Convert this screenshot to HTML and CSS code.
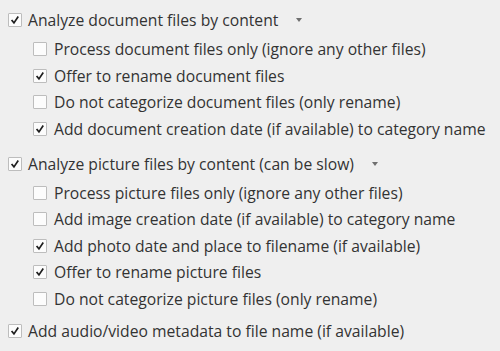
FILE: index.html
```html
<!DOCTYPE html>
<html lang="en">
<head>
    <meta charset="UTF-8">
    <title>Content analysis options</title>
    <link rel="stylesheet" href="styles.css">
</head>
<body>
    <div class="options">
        <!-- documents -->
        <div class="row main">
            <span class="box checked"><svg viewBox="0 0 14 14"><polyline points="3,7 5.8,10.4 10.8,3"/></svg></span>
            <span class="label">Analyze document files by content</span>
            <span class="arrow"></span>
        </div>
        <div class="group first">
            <div class="row sub">
                <span class="box"></span>
                <span class="label">Process document files only (ignore any other files)</span>
            </div>
            <div class="row sub">
                <span class="box checked"><svg viewBox="0 0 14 14"><polyline points="3,7 5.8,10.4 10.8,3"/></svg></span>
                <span class="label">Offer to rename document files</span>
            </div>
            <div class="row sub">
                <span class="box"></span>
                <span class="label">Do not categorize document files (only rename)</span>
            </div>
            <div class="row sub">
                <span class="box checked"><svg viewBox="0 0 14 14"><polyline points="3,7 5.8,10.4 10.8,3"/></svg></span>
                <span class="label">Add document creation date (if available) to category name</span>
            </div>
        </div>

        <!-- pictures -->
        <div class="row main">
            <span class="box checked"><svg viewBox="0 0 14 14"><polyline points="3,7 5.8,10.4 10.8,3"/></svg></span>
            <span class="label">Analyze picture files by content (can be slow)</span>
            <span class="arrow"></span>
        </div>
        <div class="group second">
            <div class="row sub">
                <span class="box"></span>
                <span class="label">Process picture files only (ignore any other files)</span>
            </div>
            <div class="row sub">
                <span class="box"></span>
                <span class="label">Add image creation date (if available) to category name</span>
            </div>
            <div class="row sub">
                <span class="box checked"><svg viewBox="0 0 14 14"><polyline points="3,7 5.8,10.4 10.8,3"/></svg></span>
                <span class="label">Add photo date and place to filename (if available)</span>
            </div>
            <div class="row sub">
                <span class="box checked"><svg viewBox="0 0 14 14"><polyline points="3,7 5.8,10.4 10.8,3"/></svg></span>
                <span class="label">Offer to rename picture files</span>
            </div>
            <div class="row sub">
                <span class="box"></span>
                <span class="label">Do not categorize picture files (only rename)</span>
            </div>
        </div>

        <!-- audio / video -->
        <div class="row main">
            <span class="box checked"><svg viewBox="0 0 14 14"><polyline points="3,7 5.8,10.4 10.8,3"/></svg></span>
            <span class="label">Add audio/video metadata to file name (if available)</span>
        </div>
    </div>
</body>
</html>
```

FILE: styles.css
```css
html, body {
    margin: 0;
    background-color: #efefef;
}

.options {
    display: flex;
    flex-direction: column;
    padding-top: 7px;
    font-family: "Open Sans", "Noto Sans", sans-serif;
    font-size: 15.7px;
    color: #333333;
}

/* 每一行：复选框 + 文字 */
.row {
    display: flex;
    align-items: center;
    height: 26.5px;
    white-space: nowrap;
}
.row.main {
    padding-left: 8px;
}
.row.sub {
    padding-left: 33px;
}

.group.first {
    padding-top: 2.5px;
    padding-bottom: 8.5px;
}
.group.second {
    padding-top: 2.5px;
    padding-bottom: 6px;
}

.box {
    width: 12px;
    height: 12px;
    border: 1px solid #bdbdbd;
    border-radius: 1px;
    background-color: #fcfcfc;
    flex: none;
}
.box svg {
    display: block;
    width: 12px;
    height: 12px;
}
.box polyline {
    fill: none;
    stroke: #1e1e1e;
    stroke-width: 2;
}

.row.main .label {
    margin-left: 6px;
}
.row.sub .label {
    margin-left: 7px;
}

/* 下拉小三角 */
.arrow {
    width: 0;
    height: 0;
    margin-left: 18px;
    border-left: 3.5px solid transparent;
    border-right: 3.5px solid transparent;
    border-top: 4px solid #6f6f6f;
}
```
